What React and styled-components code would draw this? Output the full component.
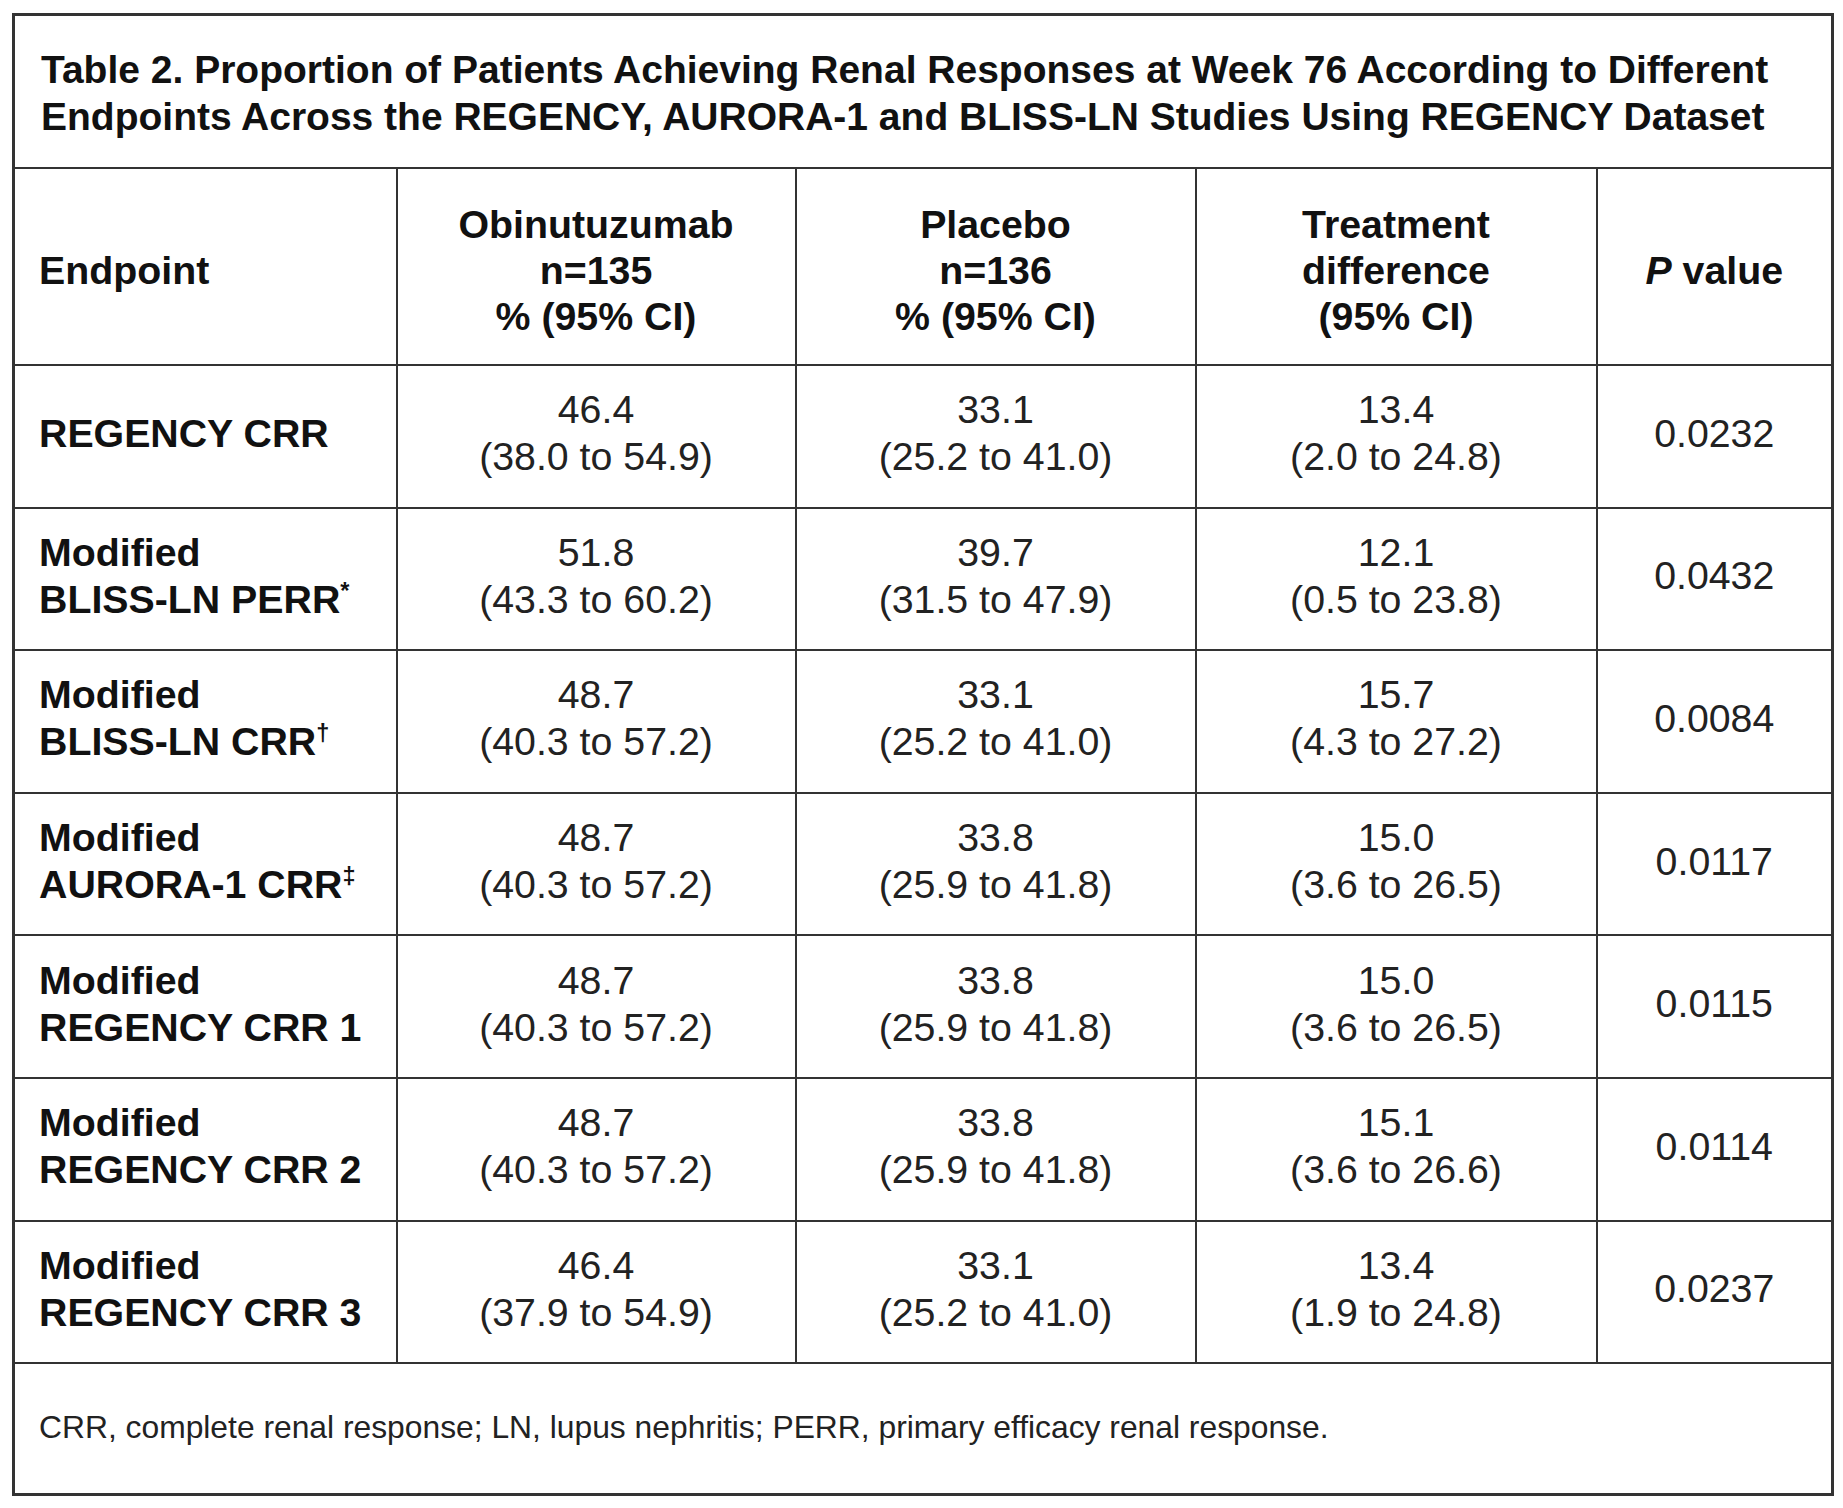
import React from 'react';
import styled, { createGlobalStyle } from 'styled-components';

const GlobalStyle = createGlobalStyle`
  body {
    margin: 0;
    background: #fff;
    font-family: 'Liberation Sans', Arial, sans-serif;
    color: #1a1a1a;
  }
`;

const Page = styled.div`
  padding: 13px 12px;
`;

const Table = styled.table`
  width: 1819px;
  table-layout: fixed;
  border-collapse: collapse;
  border: 3px solid #333;
  font-size: 39.3px;
  line-height: 47px;
`;

const TitleCell = styled.th`
  height: 148px;
  padding: 3px 26px 0;
  text-align: left;
  font-size: 39px;
  font-weight: bold;
  color: #111;
  border: 2px solid #333;
`;

const HeadCell = styled.th`
  height: 189px;
  padding: 6px 24px 0;
  font-weight: bold;
  color: #111;
  text-align: ${(p) => (p.$left ? 'left' : 'center')};
  line-height: 46px;
  border: 2px solid #333;
`;

const Cell = styled.td`
  height: 134.6px;
  padding: 0 24px 6px;
  text-align: ${(p) => (p.$left ? 'left' : 'center')};
  font-weight: ${(p) => (p.$bold ? 'bold' : 'normal')};
  color: ${(p) => (p.$bold ? '#111' : '#222')};
  border: 2px solid #333;
  vertical-align: middle;
`;

const Sup = styled.sup`
  font-size: 60%;
  line-height: 0;
  vertical-align: 0.6em;
`;

const NoteCell = styled.td`
  height: 127px;
  padding: 0 24px 2px;
  font-size: 31.8px;
  color: #222;
  border: 2px solid #333;
`;

const columns = [383, 399, 400, 401, 236];

const rows = [
  { name: ['REGENCY CRR'], obi: ['46.4', '(38.0 to 54.9)'], pla: ['33.1', '(25.2 to 41.0)'], diff: ['13.4', '(2.0 to 24.8)'], p: '0.0232' },
  { name: ['Modified', 'BLISS-LN PERR'], sup: '*', obi: ['51.8', '(43.3 to 60.2)'], pla: ['39.7', '(31.5 to 47.9)'], diff: ['12.1', '(0.5 to 23.8)'], p: '0.0432' },
  { name: ['Modified', 'BLISS-LN CRR'], sup: '†', obi: ['48.7', '(40.3 to 57.2)'], pla: ['33.1', '(25.2 to 41.0)'], diff: ['15.7', '(4.3 to 27.2)'], p: '0.0084' },
  { name: ['Modified', 'AURORA-1 CRR'], sup: '‡', obi: ['48.7', '(40.3 to 57.2)'], pla: ['33.8', '(25.9 to 41.8)'], diff: ['15.0', '(3.6 to 26.5)'], p: '0.0117' },
  { name: ['Modified', 'REGENCY CRR 1'], obi: ['48.7', '(40.3 to 57.2)'], pla: ['33.8', '(25.9 to 41.8)'], diff: ['15.0', '(3.6 to 26.5)'], p: '0.0115' },
  { name: ['Modified', 'REGENCY CRR 2'], obi: ['48.7', '(40.3 to 57.2)'], pla: ['33.8', '(25.9 to 41.8)'], diff: ['15.1', '(3.6 to 26.6)'], p: '0.0114' },
  { name: ['Modified', 'REGENCY CRR 3'], obi: ['46.4', '(37.9 to 54.9)'], pla: ['33.1', '(25.2 to 41.0)'], diff: ['13.4', '(1.9 to 24.8)'], p: '0.0237' },
];

const Lines = ({ lines, sup }) =>
  lines.map((line, i) => (
    <React.Fragment key={i}>
      {i > 0 && <br />}
      {line}
      {i === lines.length - 1 && sup && <Sup>{sup}</Sup>}
    </React.Fragment>
  ));

export default function App() {
  return (
    <Page>
      <GlobalStyle />
      <Table>
        <colgroup>
          {columns.map((w, i) => (
            <col key={i} style={{ width: w }} />
          ))}
        </colgroup>
        <thead>
          <tr>
            <TitleCell colSpan={5}>
              Table 2. Proportion of Patients Achieving Renal Responses at Week 76 According to Different
              <br />
              Endpoints Across the REGENCY, AURORA-1 and BLISS-LN Studies Using REGENCY Dataset
            </TitleCell>
          </tr>
          <tr>
            <HeadCell $left>Endpoint</HeadCell>
            <HeadCell>
              Obinutuzumab
              <br />
              n=135
              <br />% (95% CI)
            </HeadCell>
            <HeadCell>
              Placebo
              <br />
              n=136
              <br />% (95% CI)
            </HeadCell>
            <HeadCell>
              Treatment
              <br />
              difference
              <br />
              (95% CI)
            </HeadCell>
            <HeadCell>
              <i>P</i> value
            </HeadCell>
          </tr>
        </thead>
        <tbody>
          {rows.map((row) => (
            <tr key={row.name.join(' ')}>
              <Cell $left $bold>
                <Lines lines={row.name} sup={row.sup} />
              </Cell>
              <Cell>
                <Lines lines={row.obi} />
              </Cell>
              <Cell>
                <Lines lines={row.pla} />
              </Cell>
              <Cell>
                <Lines lines={row.diff} />
              </Cell>
              <Cell>{row.p}</Cell>
            </tr>
          ))}
        </tbody>
        <tfoot>
          <tr>
            <NoteCell colSpan={5}>
              CRR, complete renal response; LN, lupus nephritis; PERR, primary efficacy renal response.
            </NoteCell>
          </tr>
        </tfoot>
      </Table>
    </Page>
  );
}
